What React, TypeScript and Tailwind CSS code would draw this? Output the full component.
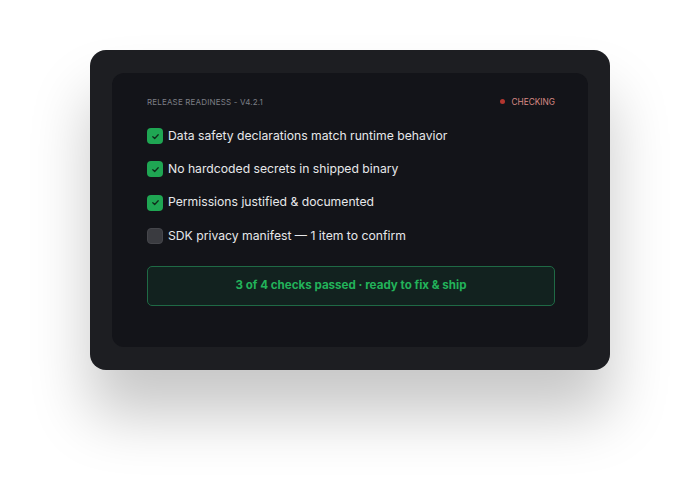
import React from 'react';

const checks = [
  { label: 'Data safety declarations match runtime behavior', done: true },
  { label: 'No hardcoded secrets in shipped binary', done: true },
  { label: 'Permissions justified & documented', done: true },
  { label: 'SDK privacy manifest — 1 item to confirm', done: false },
];

const Check: React.FC<{ done: boolean }> = ({ done }) =>
  done ? (
    <div className="w-4 h-4 rounded-[4px] bg-[#1fa653] flex items-center justify-center shrink-0">
      <svg width="9" height="9" viewBox="0 0 10 10" fill="none">
        <path d="M2 5.2L4.1 7.2L8 3" stroke="#0f2a1a" strokeWidth="1.4" strokeLinecap="round" strokeLinejoin="round" />
      </svg>
    </div>
  ) : (
    <div className="w-4 h-4 rounded-[4px] bg-[#3a3b40] border border-[#45464b] shrink-0" />
  );

const App: React.FC = () => {
  return (
    <div className="w-[700px] h-[500px] bg-white flex justify-center pt-[50px]" style={{ fontFamily: 'Inter, "Noto Sans", sans-serif' }}>
      <div className="w-[520px] h-[320px] bg-[#1d1e22] rounded-[16px] px-[22px] py-[23px] shadow-[0_45px_60px_rgba(0,0,0,0.22)]">
        <div className="h-full bg-[#131419] rounded-[12px] pt-[24px] pl-[35px] pr-[33px] flex flex-col">
          <div className="flex items-center justify-between h-[10px]">
            <span className="text-[8px] tracking-[0.02em] text-[#7d7f86] leading-none">RELEASE READINESS - V4.2.1</span>
            <span className="flex items-center gap-[6px] text-[8.3px] text-[#d98a85] leading-none">
              <span className="w-[5px] h-[5px] rounded-full bg-[#b3362f]" />
              CHECKING
            </span>
          </div>
          <div className="flex flex-col gap-[17.3px] mt-[21px]">
            {checks.map(c => (
              <div key={c.label} className="flex items-center gap-[5px] h-4">
                <Check done={c.done} />
                <span className="text-[12.2px] text-[#e7e8ea] leading-none">{c.label}</span>
              </div>
            ))}
          </div>
          <div className="mt-[22px] h-[40px] rounded-[5px] border border-[#1f6a45] bg-[#12221f] flex items-center justify-center">
            <span className="text-[11.6px] font-bold text-[#22b35a]">3 of 4 checks passed · ready to fix &amp; ship</span>
          </div>
        </div>
      </div>
    </div>
  );
};

export default App;
